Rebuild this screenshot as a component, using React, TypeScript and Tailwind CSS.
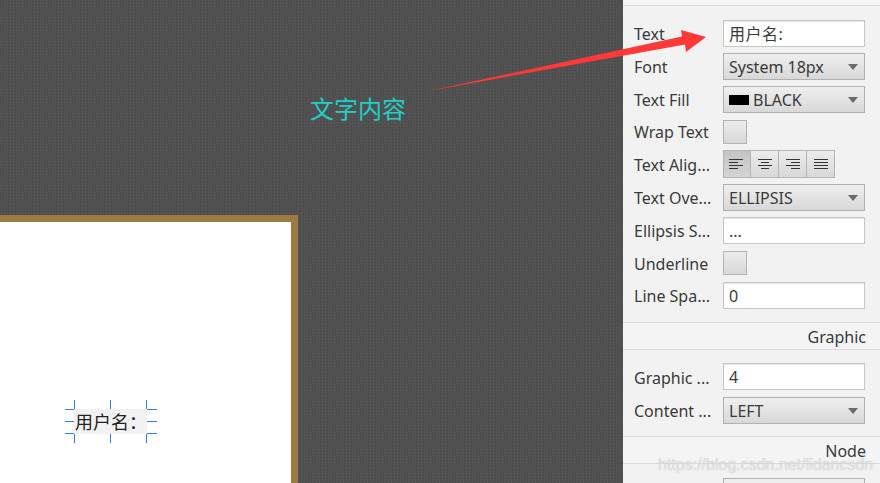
const field = 'h-[27px] w-[142px] border border-[#c6c6c6] bg-white px-[5px] flex items-center text-[16px] leading-none shadow-[inset_0_1px_1px_#e4e4e4]';
const select = 'h-[27px] w-[142px] border border-[#b0b0b0] bg-gradient-to-b from-[#efefef] to-[#d8d8d8] px-[5px] flex items-center justify-between pr-[5px] text-[16px] leading-none';

function Caret() {
  return (
    <svg width="10" height="6" viewBox="0 0 10 6" className="mr-[1px] shrink-0">
      <path d="M0 0H10L5 6Z" fill="#6b6b6b" />
    </svg>
  );
}

function Row({ label, children, className = '', labelClass = '' }: { label: string; children: React.ReactNode; className?: string; labelClass?: string }) {
  return (
    <div className={`flex shrink-0 items-center ${className}`}>
      <span className={`w-[89px] whitespace-nowrap text-[16px] leading-none text-[#3a3a3a] ${labelClass}`}>{label}</span>
      {children}
    </div>
  );
}

function Check() {
  return <div className="h-[24px] w-[24px] border border-[#b4b4b4] bg-gradient-to-b from-[#ececec] to-[#d8d8d8]" />;
}

function Align({ lines, active }: { lines: [number, number][]; active?: boolean }) {
  return (
    <div className={`flex h-[28px] w-[28px] items-center justify-center border-y border-r border-[#b4b4b4] first:border-l ${active ? 'bg-gradient-to-b from-[#c4c4c4] to-[#d4d4d4]' : 'bg-gradient-to-b from-[#ececec] to-[#d8d8d8]'}`}>
      <svg width="16" height="10" viewBox="0 0 16 10">
        {lines.map(([x1, x2], i) => (
          <line key={i} x1={x1} x2={x2} y1={i * 3 + 0.5} y2={i * 3 + 0.5} stroke="#333" strokeWidth="1" />
        ))}
      </svg>
    </div>
  );
}

function SectionHead({ title }: { title: string }) {
  return (
    <div className="flex h-[27px] shrink-0 items-center justify-end border-b border-[#dcdcdc] bg-[#f4f4f4] pr-[14px] pt-[2px] text-[16px] leading-none text-[#3a3a3a]">
      {title}
    </div>
  );
}

// blue resize handles round the selected label
function Handles() {
  const c = 'absolute bg-[#2f80ed]';
  return (
    <>
      <span className={`${c} left-[-9px] top-0 h-px w-[9px]`} />
      <span className={`${c} left-0 top-[-9px] h-[9px] w-px`} />
      <span className={`${c} left-[36px] top-[-9px] h-[9px] w-px`} />
      <span className={`${c} right-0 top-[-9px] h-[9px] w-px`} />
      <span className={`${c} right-[-10px] top-0 h-px w-[10px]`} />
      <span className={`${c} left-[-9px] top-[12px] h-px w-[9px]`} />
      <span className={`${c} right-[-10px] top-[12px] h-px w-[10px]`} />
      <span className={`${c} left-[-9px] bottom-0 h-px w-[9px]`} />
      <span className={`${c} left-0 bottom-[-9px] h-[9px] w-px`} />
      <span className={`${c} left-[36px] bottom-[-9px] h-[9px] w-px`} />
      <span className={`${c} right-0 bottom-[-9px] h-[9px] w-px`} />
      <span className={`${c} right-[-10px] bottom-0 h-px w-[10px]`} />
    </>
  );
}

export default function App() {
  return (
    <div className="relative flex h-[483px] w-[880px] overflow-hidden font-['Noto_Sans','Noto_Sans_CJK_SC',sans-serif]">
      {/* canvas */}
      <div className="flex h-full w-[623px] flex-col bg-[#505050] bg-[repeating-conic-gradient(#545454_0_25%,#4c4c4c_0_50%)] bg-[length:3px_3px] pt-[215px]">
        <div className="relative h-[268px] w-[298px] border-r-[7px] border-t-[7px] border-[#9b7b3f] bg-white">
          <div className="absolute left-[74px] top-[187px] flex h-[25px] w-[73px] items-center whitespace-nowrap bg-[#f2f2f2] pl-px text-[18px] leading-none text-[#222]">
            用户名：
            <Handles />
          </div>
        </div>
      </div>

      {/* inspector */}
      <div className="flex h-full flex-1 flex-col overflow-hidden bg-[#f2f2f2] text-[#3a3a3a]">
        <div className="h-[6px] shrink-0 border-b border-[#dcdcdc] bg-[#f6f6f6]" />
        <div className="flex shrink-0 flex-col gap-[6px] border-b border-[#dcdcdc] pb-[13px] pl-[11px] pt-[14px]">
          <Row label="Text"><div className={`${field} tracking-[0.5px]`}>用户名:</div></Row>
          <Row label="Font"><div className={select}>System 18px<Caret /></div></Row>
          <Row label="Text Fill">
            <div className={select}>
              <span className="flex items-center gap-[4px]"><span className="h-[10px] w-[20px] bg-black" />BLACK</span>
              <Caret />
            </div>
          </Row>
          <Row label="Wrap Text" className="mt-px"><Check /></Row>
          <Row label="Text Alig..." labelClass="pt-[2px]">
            <div className="flex">
              <Align active lines={[[0, 14], [0, 9], [0, 14], [0, 9]]} />
              <Align lines={[[1, 15], [4, 12], [1, 15], [4, 12]]} />
              <Align lines={[[1, 15], [6, 15], [1, 15], [6, 15]]} />
              <Align lines={[[1, 15], [1, 15], [1, 15], [1, 15]]} />
            </div>
          </Row>
          <Row label="Text Ove..."><div className={select}>ELLIPSIS<Caret /></div></Row>
          <Row label="Ellipsis S..."><div className={field}>...</div></Row>
          <Row label="Underline" className="mt-px" labelClass="pt-[2px]"><Check /></Row>
          <Row label="Line Spa..." className="mt-px"><div className={field}>0</div></Row>
        </div>
        <SectionHead title="Graphic" />
        <div className="flex shrink-0 flex-col gap-[7px] border-b border-[#dcdcdc] pb-[12px] pl-[11px] pt-[13px]">
          <Row label="Graphic ..." labelClass="pt-[2px]"><div className={field}>4</div></Row>
          <Row label="Content ..."><div className={select}>LEFT<Caret /></div></Row>
        </div>
        <SectionHead title="Node" />
        <div className="shrink-0 pl-[11px] pt-[14px]">
          <Row label=""><div className={select} /></Row>
        </div>
      </div>

      {/* annotation laid over the screenshot */}
      <span className="absolute left-[310px] top-[92px] text-[24px] leading-[34px] text-[#20cfc6]">文字内容</span>
      <svg className="pointer-events-none absolute left-0 top-0" width="880" height="483" viewBox="0 0 880 483">
        <path d="M426 91.5L682 36.5L681 30L706 37L686 52L685 44.5Z" fill="#ff3838" />
      </svg>

      {/* blog watermark */}
      <span className="absolute left-[658px] top-[458px] font-['Liberation_Sans',sans-serif] text-[16px] leading-[14px] text-white/50 [text-shadow:0_0_1px_#8888]">
        https://blog.csdn.net/lidancsdn
      </span>
    </div>
  );
}
